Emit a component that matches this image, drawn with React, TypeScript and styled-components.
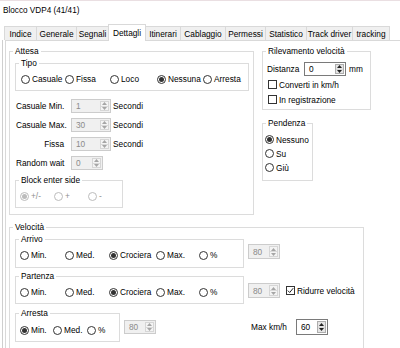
import React from 'react';
import styled, { createGlobalStyle } from 'styled-components';

const Global = createGlobalStyle`
  html, body { margin: 0; padding: 0; background: #ffffff; }
  body {
    font-family: "Liberation Sans", Arial, sans-serif;
    font-size: 8.3px;
    color: #000000;
    width: 400px;
    height: 348px;
    overflow: hidden;
  }
  * { box-sizing: border-box; }
`;

const Window = styled.div`
  width: 400px;
  height: 348px;
  overflow: hidden;
  background: #ffffff;
  display: flex;
  flex-direction: column;
  border-top: 1px solid #eadfe2;
`;

const TitleBar = styled.div`
  height: 23px;
  flex: none;
  padding: 5px 0 0 3px;
  line-height: 10px;
  font-size: 8.2px;
  color: #000;
`;

const TabStrip = styled.div`
  height: 16px;
  flex: none;
  display: flex;
  align-items: flex-end;
  padding-left: 4px;
  position: relative;
  z-index: 1;
`;

const Tab = styled.div<{ $w: number; $active?: boolean }>`
  width: ${p => p.$w}px;
  height: ${p => (p.$active ? 17 : 14)}px;
  margin-left: -1px;
  margin-bottom: ${p => (p.$active ? -1 : 0)}px;
  &:first-child { margin-left: 0; }
  border: 1px solid #d9d9d9;
  border-bottom: none;
  background: ${p => (p.$active ? '#ffffff' : '#f0f0f0')};
  position: relative;
  z-index: ${p => (p.$active ? 2 : 1)};
  display: flex;
  align-items: ${p => (p.$active ? 'flex-start' : 'center')};
  padding-top: ${p => (p.$active ? 3 : 0)}px;
  justify-content: center;
  white-space: nowrap;
  line-height: 10px;
`;

const Body = styled.div`
  flex: 1;
  display: flex;
  padding-left: 2px;
  min-height: 0;
`;

const Frame = styled.div`
  flex: 1;
  display: flex;
  border-left: 1px solid #cfcfcf;
  padding-left: 2px;
  min-height: 0;
`;

const Panel = styled.div`
  flex: 1;
  border-left: 1px solid #d9d9d9;
  border-top: 1px solid #d9d9d9;
  padding: 5px 0 0 3px;
  overflow: hidden;
  display: flex;
  flex-direction: column;
  align-items: flex-start;
`;

const TopRow = styled.div`
  display: flex;
  align-items: flex-start;
`;

const RightColumn = styled.div`
  display: flex;
  flex-direction: column;
  margin-left: 8px;
  gap: 8px;
`;

const GroupBox = styled.fieldset<{ $w: number; $h: number; $mt?: number }>`
  margin: ${p => p.$mt ?? 0}px 0 0 0;
  padding: 0;
  border: 1px solid #dcdcdc;
  width: ${p => p.$w}px;
  height: ${p => p.$h}px;
  min-width: 0;
  flex: none;
`;

const Legend = styled.legend`
  padding: 0 2px;
  margin-left: 3px;
  line-height: 11px;
  height: 11px;
  font-size: 8.3px;
  color: #000;
`;

const GroupContent = styled.div<{ $pt: number; $pl: number }>`
  padding: ${p => p.$pt}px 0 0 ${p => p.$pl}px;
  display: flex;
  flex-direction: column;
  align-items: flex-start;
`;

const RadioRow = styled.div`
  display: flex;
  align-items: center;
  height: 10px;
`;

const RadioColumn = styled.div`
  display: flex;
  flex-direction: column;
  gap: 3px;
`;

const OptionLabel = styled.label<{ $w?: number; $disabled?: boolean }>`
  display: flex;
  align-items: center;
  gap: 2px;
  width: ${p => (p.$w ? `${p.$w}px` : 'auto')};
  height: 11px;
  line-height: 10px;
  flex: none;
  white-space: nowrap;
  color: ${p => (p.$disabled ? '#8d8d8d' : '#000')};
`;

const RadioCircle = styled.span<{ $checked?: boolean; $disabled?: boolean }>`
  width: 9px;
  height: 9px;
  border-radius: 50%;
  border: 1px solid ${p => (p.$disabled ? '#bcbcbc' : '#333333')};
  background: #ffffff;
  display: flex;
  align-items: center;
  justify-content: center;
  flex: none;
  &::after {
    content: '';
    width: 5px;
    height: 5px;
    border-radius: 50%;
    background: ${p => (p.$disabled ? '#bcbcbc' : '#333333')};
    display: ${p => (p.$checked ? 'block' : 'none')};
  }
`;

const CheckSquare = styled.span`
  width: 9px;
  height: 9px;
  border: 1px solid #333333;
  background: #ffffff;
  display: flex;
  align-items: center;
  justify-content: center;
  flex: none;
`;

const FieldGrid = styled.div`
  display: grid;
  grid-template-columns: 55px 42px auto;
  grid-auto-rows: 14px;
  row-gap: 5px;
  margin: 8px 0 0 1px;
  align-items: center;
`;

const FieldLabel = styled.span`
  text-align: right;
  padding-right: 7px;
  white-space: nowrap;
`;

const InlineRow = styled.div<{ $mt?: number; $h?: number }>`
  display: flex;
  align-items: center;
  height: ${p => p.$h ?? 11}px;
  margin-top: ${p => p.$mt ?? 0}px;
`;

const FixedLabel = styled.span<{ $w: number }>`
  width: ${p => p.$w}px;
  flex: none;
  white-space: nowrap;
`;

const Unit = styled.span<{ $ml?: number }>`
  margin-left: ${p => p.$ml ?? 0}px;
  white-space: nowrap;
`;

const SpinBox = styled.div<{ $w: number; $h: number; $disabled?: boolean; $ml?: number }>`
  width: ${p => p.$w}px;
  height: ${p => p.$h}px;
  margin-left: ${p => p.$ml ?? 0}px;
  border: 1px solid ${p => (p.$disabled ? '#cccccc' : '#7a7a7a')};
  background: ${p => (p.$disabled ? '#f0f0f0' : '#ffffff')};
  display: flex;
  flex: none;
  padding: 1px;
`;

const SpinValue = styled.span<{ $disabled?: boolean }>`
  flex: 1;
  padding-left: 3px;
  display: flex;
  align-items: center;
  line-height: 10px;
  color: ${p => (p.$disabled ? '#8a8a8a' : '#000000')};
`;

const SpinButtons = styled.div<{ $disabled?: boolean }>`
  width: 9px;
  display: flex;
  flex-direction: column;
  border: 1px solid ${p => (p.$disabled ? '#d6d6d6' : '#adadad')};
  background: ${p => (p.$disabled ? '#f4f4f4' : '#e5e5e5')};
`;

const SpinArrow = styled.span`
  flex: 1;
  display: flex;
  align-items: center;
  justify-content: center;
  & + & { border-top: 1px solid #d9d9d9; }
`;

const VelRow = styled.div<{ $mt?: number }>`
  display: flex;
  align-items: flex-start;
  margin-top: ${p => p.$mt ?? 0}px;
`;

const SideGroup = styled.div<{ $top: number; $ml: number }>`
  display: flex;
  align-items: center;
  margin: ${p => p.$top}px 0 0 ${p => p.$ml}px;
`;

const Radio: React.FC<{ label: string; checked?: boolean; disabled?: boolean; w?: number }> = ({
  label,
  checked,
  disabled,
  w,
}) => (
  <OptionLabel $w={w} $disabled={disabled}>
    <RadioCircle $checked={checked} $disabled={disabled} />
    <span>{label}</span>
  </OptionLabel>
);

const Check: React.FC<{ label: string; checked?: boolean }> = ({ label, checked }) => (
  <OptionLabel>
    <CheckSquare>
      {checked && (
        <svg width="7" height="7" viewBox="0 0 7 7">
          <path d="M0.8 3.6 L2.7 5.5 L6.2 1.2" fill="none" stroke="#222" strokeWidth="1" />
        </svg>
      )}
    </CheckSquare>
    <span>{label}</span>
  </OptionLabel>
);

const Spinner: React.FC<{ value: string; w: number; h?: number; disabled?: boolean; ml?: number }> = ({
  value,
  w,
  h = 14,
  disabled,
  ml,
}) => {
  const c = disabled ? '#a6a6a6' : '#222222';
  return (
    <SpinBox $w={w} $h={h} $disabled={disabled} $ml={ml}>
      <SpinValue $disabled={disabled}>{value}</SpinValue>
      <SpinButtons $disabled={disabled}>
        <SpinArrow>
          <svg width="5" height="3" viewBox="0 0 5 3">
            <path d="M0 3 L2.5 0 L5 3 Z" fill={c} />
          </svg>
        </SpinArrow>
        <SpinArrow>
          <svg width="5" height="3" viewBox="0 0 5 3">
            <path d="M0 0 L2.5 3 L5 0 Z" fill={c} />
          </svg>
        </SpinArrow>
      </SpinButtons>
    </SpinBox>
  );
};

const tabs: { label: string; w: number; active?: boolean }[] = [
  { label: 'Indice', w: 33 },
  { label: 'Generale', w: 41 },
  { label: 'Segnali', w: 33 },
  { label: 'Dettagli', w: 38, active: true },
  { label: 'Itinerari', w: 36 },
  { label: 'Cablaggio', w: 46 },
  { label: 'Permessi', w: 41 },
  { label: 'Statistico', w: 42 },
  { label: 'Track driver', w: 47 },
  { label: 'tracking', w: 38 },
];

const speedOptions = (checked: string) =>
  [
    { l: 'Min.', w: 45 },
    { l: 'Med.', w: 44 },
    { l: 'Crociera', w: 47 },
    { l: 'Max.', w: 43 },
    { l: '%' },
  ].map(o => <Radio key={o.l} label={o.l} w={o.w} checked={o.l === checked} />);

export default function App() {
  return (
    <>
      <Global />
      <Window>
        <TitleBar>Blocco VDP4 (41/41)</TitleBar>
        <TabStrip>
          {tabs.map(t => (
            <Tab key={t.label} $w={t.w} $active={t.active}>
              {t.label}
            </Tab>
          ))}
        </TabStrip>
        <Body>
          <Frame>
            <Panel>
              <TopRow>
                <GroupBox $w={245} $h={169}>
                  <Legend>Attesa</Legend>
                  <GroupContent $pt={1} $pl={5}>
                    <GroupBox $w={234} $h={33}>
                      <Legend>Tipo</Legend>
                      <GroupContent $pt={5} $pl={5}>
                        <RadioRow>
                          <Radio label="Casuale" w={44} />
                          <Radio label="Fissa" w={45} />
                          <Radio label="Loco" w={47} />
                          <Radio label="Nessuna" w={46} checked />
                          <Radio label="Arresta" />
                        </RadioRow>
                      </GroupContent>
                    </GroupBox>
                    <FieldGrid>
                      <FieldLabel>Casuale Min.</FieldLabel>
                      <Spinner value="1" w={40} disabled />
                      <span>Secondi</span>
                      <FieldLabel>Casuale Max.</FieldLabel>
                      <Spinner value="30" w={40} disabled />
                      <span>Secondi</span>
                      <FieldLabel>Fissa</FieldLabel>
                      <Spinner value="10" w={40} disabled />
                      <span>Secondi</span>
                      <FieldLabel>Random wait</FieldLabel>
                      <Spinner value="0" w={32} disabled />
                      <span />
                    </FieldGrid>
                    <GroupBox $w={108} $h={33} $mt={5}>
                      <Legend>Block enter side</Legend>
                      <GroupContent $pt={5} $pl={4}>
                        <RadioRow>
                          <Radio label="+/-" w={34} checked disabled />
                          <Radio label="+" w={34} disabled />
                          <Radio label="-" disabled />
                        </RadioRow>
                      </GroupContent>
                    </GroupBox>
                  </GroupContent>
                </GroupBox>
                <RightColumn>
                  <GroupBox $w={109} $h={64}>
                    <Legend>Rilevamento velocità</Legend>
                    <GroupContent $pt={5} $pl={4}>
                      <InlineRow $h={14}>
                        <FixedLabel $w={37}>Distanza</FixedLabel>
                        <Spinner value="0" w={42} />
                        <Unit $ml={3}>mm</Unit>
                      </InlineRow>
                      <InlineRow $mt={3}>
                        <Unit $ml={1}>
                          <Check label="Converti in km/h" />
                        </Unit>
                      </InlineRow>
                      <InlineRow $mt={4}>
                        <Unit $ml={1}>
                          <Check label="In registrazione" />
                        </Unit>
                      </InlineRow>
                    </GroupContent>
                  </GroupBox>
                  <GroupBox $w={51} $h={63}>
                    <Legend>Pendenza</Legend>
                    <GroupContent $pt={5} $pl={2}>
                      <RadioColumn>
                        <Radio label="Nessuno" checked />
                        <Radio label="Su" />
                        <Radio label="Giù" />
                      </RadioColumn>
                    </GroupContent>
                  </GroupBox>
                </RightColumn>
              </TopRow>
              <GroupBox $w={355} $h={140} $mt={7}>
                <Legend>Velocità</Legend>
                <GroupContent $pt={1} $pl={5}>
                  <VelRow>
                    <GroupBox $w={229} $h={34}>
                      <Legend>Arrivo</Legend>
                      <GroupContent $pt={5} $pl={4}>
                        <RadioRow>{speedOptions('Crociera')}</RadioRow>
                      </GroupContent>
                    </GroupBox>
                    <SideGroup $top={10} $ml={4}>
                      <Spinner value="80" w={32} h={15} disabled />
                    </SideGroup>
                  </VelRow>
                  <VelRow $mt={3}>
                    <GroupBox $w={229} $h={33}>
                      <Legend>Partenza</Legend>
                      <GroupContent $pt={5} $pl={4}>
                        <RadioRow>{speedOptions('Crociera')}</RadioRow>
                      </GroupContent>
                    </GroupBox>
                    <SideGroup $top={12} $ml={4}>
                      <Spinner value="80" w={32} h={15} disabled />
                      <Unit $ml={6}>
                        <Check label="Ridurre velocità" checked />
                      </Unit>
                    </SideGroup>
                  </VelRow>
                  <VelRow $mt={4}>
                    <GroupBox $w={105} $h={34}>
                      <Legend>Arresta</Legend>
                      <GroupContent $pt={6} $pl={4}>
                        <RadioRow>
                          <Radio label="Min." w={33} checked />
                          <Radio label="Med." w={34} />
                          <Radio label="%" />
                        </RadioRow>
                      </GroupContent>
                    </GroupBox>
                    <SideGroup $top={12} $ml={4}>
                      <Spinner value="80" w={32} h={14} disabled />
                    </SideGroup>
                    <SideGroup $top={11} $ml={95}>
                      <FixedLabel $w={45}>Max km/h</FixedLabel>
                      <Spinner value="60" w={32} h={16} />
                    </SideGroup>
                  </VelRow>
                </GroupContent>
              </GroupBox>
            </Panel>
          </Frame>
        </Body>
      </Window>
    </>
  );
}
